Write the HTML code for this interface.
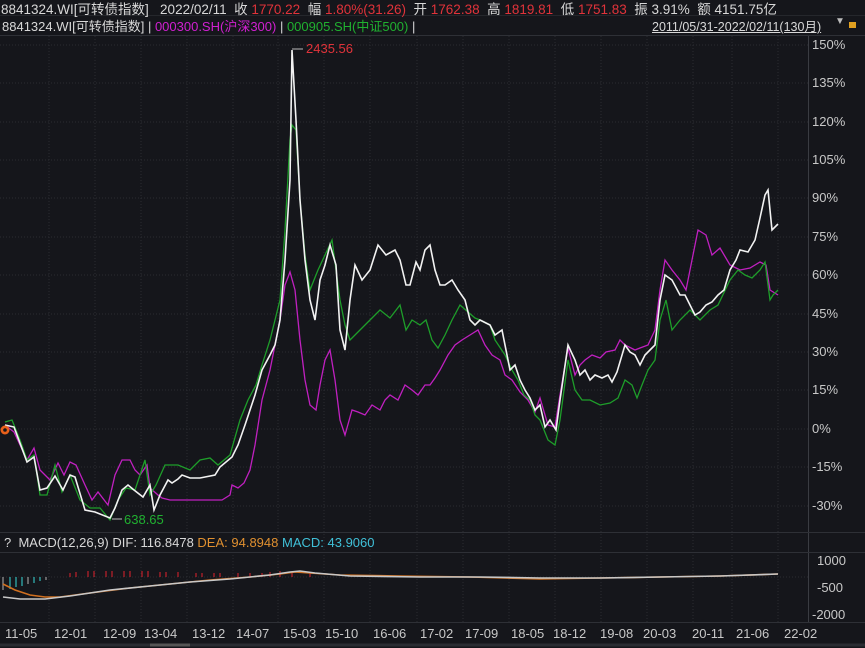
<!DOCTYPE html>
<html><head><meta charset="utf-8"><style>
html,body{margin:0;padding:0;background:#15161b;width:865px;height:648px;overflow:hidden;font-family:"Liberation Sans","Noto Sans CJK SC",sans-serif;}
.t{position:absolute;white-space:nowrap;font-size:13px;color:#d8d8d8;}
</style></head><body>
<svg width="865" height="648" style="position:absolute;left:0;top:0" xmlns="http://www.w3.org/2000/svg">
<rect width="865" height="648" fill="#15161b"/>
<line x1="0" y1="35.5" x2="865" y2="35.5" stroke="#2e3036"/>
<line x1="0" y1="15.5" x2="865" y2="15.5" stroke="#25272c"/>
<line x1="808.5" y1="36" x2="808.5" y2="622" stroke="#3a3c42"/>
<g stroke="#2a2c32" stroke-dasharray="1,2">
<line x1="0" y1="45" x2="808" y2="45"/><line x1="0" y1="83" x2="808" y2="83"/><line x1="0" y1="122" x2="808" y2="122"/><line x1="0" y1="160" x2="808" y2="160"/><line x1="0" y1="198" x2="808" y2="198"/><line x1="0" y1="237" x2="808" y2="237"/><line x1="0" y1="275" x2="808" y2="275"/><line x1="0" y1="314" x2="808" y2="314"/><line x1="0" y1="352" x2="808" y2="352"/><line x1="0" y1="390" x2="808" y2="390"/><line x1="0" y1="429" x2="808" y2="429"/><line x1="0" y1="467" x2="808" y2="467"/><line x1="0" y1="506" x2="808" y2="506"/>
<line x1="49" y1="36" x2="49" y2="622"/><line x1="95" y1="36" x2="95" y2="622"/><line x1="141" y1="36" x2="141" y2="622"/><line x1="187" y1="36" x2="187" y2="622"/><line x1="233" y1="36" x2="233" y2="622"/><line x1="278" y1="36" x2="278" y2="622"/><line x1="324" y1="36" x2="324" y2="622"/><line x1="370" y1="36" x2="370" y2="622"/><line x1="417" y1="36" x2="417" y2="622"/><line x1="463" y1="36" x2="463" y2="622"/><line x1="509" y1="36" x2="509" y2="622"/><line x1="555" y1="36" x2="555" y2="622"/><line x1="601" y1="36" x2="601" y2="622"/><line x1="647" y1="36" x2="647" y2="622"/><line x1="693" y1="36" x2="693" y2="622"/><line x1="732" y1="36" x2="732" y2="622"/><line x1="778" y1="36" x2="778" y2="622"/>
<line x1="0" y1="577" x2="808" y2="577"/>
</g>
<line x1="0" y1="532.5" x2="865" y2="532.5" stroke="#2e3036"/>
<line x1="0" y1="552.5" x2="865" y2="552.5" stroke="#2e3036"/>
<line x1="0" y1="622.5" x2="865" y2="622.5" stroke="#2e3036"/>
<line x1="0" y1="645" x2="865" y2="645" stroke="#2a2c32" stroke-width="3"/>
<line x1="150" y1="645" x2="190" y2="645" stroke="#555" stroke-width="3"/>
<polyline fill="none" stroke="#c020c0" stroke-width="1.3" points="5,425 14,432 27,460 34,448 40,470 50,480 58,463 64,475 70,462 76,465 85,485 92,500 98,492 108,505 115,475 122,460 130,460 135,470 140,475 147,465 150,488 158,495 162,498 170,500 190,500 222,500 230,495 232,485 238,488 244,483 250,470 255,445 262,400 270,370 280,320 285,285 290,272 295,290 300,340 305,380 310,405 316,410 320,385 325,360 330,350 335,380 340,420 345,435 352,410 358,412 365,415 372,405 380,410 385,400 390,395 398,400 405,385 412,390 418,395 425,385 430,385 435,378 440,370 448,355 455,345 462,340 470,335 478,330 485,345 492,355 500,360 505,375 512,380 520,392 528,400 535,412 540,398 548,425 555,427 560,395 568,348 575,375 580,365 585,360 592,355 600,358 606,352 615,350 620,340 625,345 635,350 640,348 648,345 655,330 660,290 665,260 672,270 680,280 686,290 692,260 698,230 706,235 712,255 720,248 730,265 740,270 750,268 760,262 766,265 770,290 778,295"/>
<polyline fill="none" stroke="#1e9e2a" stroke-width="1.3" points="5,422 12,420 20,440 27,460 34,455 40,495 47,495 55,465 62,492 70,475 80,500 90,508 100,508 110,520 118,500 126,488 135,490 145,460 150,495 156,485 165,465 178,465 190,470 200,460 210,458 218,465 230,455 240,420 248,400 256,385 262,365 270,340 280,300 285,230 290,140 292,125 296,130 300,200 305,255 310,290 318,270 325,255 332,240 340,300 345,325 350,340 360,330 370,320 380,310 390,318 400,305 406,330 412,320 420,325 426,320 432,340 438,348 445,335 452,320 460,305 468,312 475,318 480,320 490,325 495,340 505,355 512,370 518,380 524,395 530,400 535,415 540,420 548,440 555,445 560,420 568,360 575,390 582,400 590,400 600,405 610,403 618,398 625,380 632,385 637,398 642,385 648,370 655,360 660,320 666,300 672,330 680,320 690,310 700,320 710,310 718,305 730,280 738,270 745,275 752,278 760,270 765,262 770,300 773,295 778,290"/>
<polyline fill="none" stroke="#f2f2f2" stroke-width="1.6" points="5,425 14,427 27,462 34,457 40,490 47,488 55,476 63,490 70,475 75,477 85,510 95,512 110,518 115,508 122,490 128,485 134,490 143,497 150,485 154,510 160,495 168,480 172,483 178,479 182,475 190,478 200,478 215,475 220,467 232,457 238,445 245,425 255,395 262,370 270,355 275,345 280,320 285,260 290,180 292,50 296,120 300,200 305,260 310,300 315,320 320,280 325,265 330,245 336,265 340,330 345,350 350,300 355,265 362,280 370,270 378,245 386,255 395,250 400,260 406,285 410,285 416,262 420,270 425,250 430,245 435,270 440,285 445,285 452,280 458,290 465,300 470,320 475,325 480,320 490,325 495,335 502,330 510,370 515,365 520,380 525,390 530,398 535,410 540,405 545,427 550,420 556,430 560,400 568,345 575,360 580,375 585,370 590,380 595,375 602,378 608,375 612,382 617,372 625,345 630,352 635,355 640,365 645,355 650,350 655,345 660,300 665,275 672,280 680,295 685,295 690,305 695,315 700,312 706,305 712,302 718,295 724,290 730,270 736,260 740,250 748,252 755,240 760,218 765,195 768,190 772,230 778,224"/>
<polyline fill="none" stroke="#bbb" points="292,49 303,49"/>
<polyline fill="none" stroke="#bbb" points="112,519 122,519"/>
<circle cx="5" cy="430" r="4.5" fill="#e8601a"/><circle cx="5" cy="430" r="1.8" fill="#15161b"/>
<g stroke-width="1.2">
<line x1="3" y1="577" x2="3" y2="590" stroke="#999"/><line x1="10" y1="577" x2="10" y2="589" stroke="#3bb"/><line x1="16" y1="577" x2="16" y2="587" stroke="#3bb"/><line x1="22" y1="577" x2="22" y2="586" stroke="#3bb"/><line x1="28" y1="577" x2="28" y2="584" stroke="#999"/><line x1="34" y1="577" x2="34" y2="583" stroke="#3bb"/><line x1="40" y1="577" x2="40" y2="581" stroke="#3bb"/><line x1="46" y1="577" x2="46" y2="580" stroke="#999"/>
</g>
<g stroke="#c0202a" stroke-width="1.2">
<line x1="70" y1="573" x2="70" y2="577"/><line x1="76" y1="572" x2="76" y2="577"/><line x1="88" y1="571" x2="88" y2="577"/><line x1="94" y1="571" x2="94" y2="577"/><line x1="106" y1="571" x2="106" y2="577"/><line x1="112" y1="571" x2="112" y2="577"/><line x1="124" y1="571" x2="124" y2="577"/><line x1="130" y1="571" x2="130" y2="577"/><line x1="142" y1="571" x2="142" y2="577"/><line x1="148" y1="571" x2="148" y2="577"/><line x1="160" y1="572" x2="160" y2="577"/><line x1="166" y1="572" x2="166" y2="577"/><line x1="178" y1="572" x2="178" y2="577"/><line x1="196" y1="573" x2="196" y2="577"/><line x1="202" y1="573" x2="202" y2="577"/><line x1="214" y1="573" x2="214" y2="577"/><line x1="220" y1="573" x2="220" y2="577"/><line x1="238" y1="573" x2="238" y2="577"/><line x1="250" y1="573" x2="250" y2="577"/><line x1="262" y1="573" x2="262" y2="577"/><line x1="270" y1="572" x2="270" y2="577"/><line x1="280" y1="571" x2="280" y2="577"/><line x1="292" y1="572" x2="292" y2="577"/><line x1="310" y1="572" x2="310" y2="577"/>
</g>
<polyline fill="none" stroke="#d07020" stroke-width="1.6" points="3,584 15,590 30,595 45,597 60,597 90,593 130,588 170,584 210,580 250,577 280,574 295,572 310,573 340,575 400,576 470,577 540,579 600,578 660,577 720,576 778,574"/>
<polyline fill="none" stroke="#c8c8c8" stroke-width="1.6" points="3,597 20,599 45,599 70,596 110,590 150,586 190,582 230,579 270,575 290,572 300,571 315,573 350,576 420,577 480,577 540,578 600,578 660,577 720,576 778,574"/>
</svg>
<div class="t" style="left:1px;top:-2px;font-size:13.5px;">8841324.WI[可转债指数]&nbsp;&nbsp;&nbsp;2022/02/11&nbsp;&nbsp;收 <span style="color:#e0333a">1770.22</span>&nbsp;&nbsp;幅 <span style="color:#e0333a">1.80%(31.26)</span>&nbsp;&nbsp;开 <span style="color:#e0333a">1762.38</span>&nbsp;&nbsp;高 <span style="color:#e0333a">1819.81</span>&nbsp;&nbsp;低 <span style="color:#e0333a">1751.83</span>&nbsp;&nbsp;振 3.91%&nbsp;&nbsp;额 4151.75亿</div>
<div class="t" style="left:2px;top:16px;">8841324.WI[可转债指数] | <span style="color:#d020d0">000300.SH(沪深300)</span> | <span style="color:#20b030">000905.SH(中证500)</span> |</div>
<div class="t" style="left:652px;top:16px;text-decoration:underline;font-size:12.5px;">2011/05/31-2022/02/11(130月)</div>
<div class="t" style="left:835px;top:16px;font-size:10px;color:#bbb;">▼</div>
<div style="position:absolute;left:849px;top:22px;width:7px;height:6px;background:#e0a020;"></div>
<div class="t" style="left:306px;top:41px;color:#e0333a;">2435.56</div>
<div class="t" style="left:124px;top:512px;color:#20b030;">638.65</div>
<div class="t" style="left:812px;top:37px;color:#c8c8c8;">150%</div>
<div class="t" style="left:812px;top:75px;color:#c8c8c8;">135%</div>
<div class="t" style="left:812px;top:114px;color:#c8c8c8;">120%</div>
<div class="t" style="left:812px;top:152px;color:#c8c8c8;">105%</div>
<div class="t" style="left:812px;top:190px;color:#c8c8c8;">90%</div>
<div class="t" style="left:812px;top:229px;color:#c8c8c8;">75%</div>
<div class="t" style="left:812px;top:267px;color:#c8c8c8;">60%</div>
<div class="t" style="left:812px;top:306px;color:#c8c8c8;">45%</div>
<div class="t" style="left:812px;top:344px;color:#c8c8c8;">30%</div>
<div class="t" style="left:812px;top:382px;color:#c8c8c8;">15%</div>
<div class="t" style="left:812px;top:421px;color:#c8c8c8;">0%</div>
<div class="t" style="left:812px;top:459px;color:#c8c8c8;">-15%</div>
<div class="t" style="left:812px;top:498px;color:#c8c8c8;">-30%</div>
<div class="t" style="left:4px;top:535px;">?&nbsp; MACD(12,26,9) DIF: 116.8478 <span style="color:#e09030">DEA: 94.8948</span> <span style="color:#40c0d8">MACD: 43.9060</span></div>
<div class="t" style="left:817px;top:553px;color:#c8c8c8;">1000</div>
<div class="t" style="left:817px;top:580px;color:#c8c8c8;">-500</div>
<div class="t" style="left:812px;top:607px;color:#c8c8c8;">-2000</div>
<div class="t" style="top:626px;left:5px;color:#c8c8c8;">11-05</div>
<div class="t" style="top:626px;left:54px;color:#c8c8c8;">12-01</div>
<div class="t" style="top:626px;left:103px;color:#c8c8c8;">12-09</div>
<div class="t" style="top:626px;left:144px;color:#c8c8c8;">13-04</div>
<div class="t" style="top:626px;left:192px;color:#c8c8c8;">13-12</div>
<div class="t" style="top:626px;left:236px;color:#c8c8c8;">14-07</div>
<div class="t" style="top:626px;left:283px;color:#c8c8c8;">15-03</div>
<div class="t" style="top:626px;left:325px;color:#c8c8c8;">15-10</div>
<div class="t" style="top:626px;left:373px;color:#c8c8c8;">16-06</div>
<div class="t" style="top:626px;left:420px;color:#c8c8c8;">17-02</div>
<div class="t" style="top:626px;left:465px;color:#c8c8c8;">17-09</div>
<div class="t" style="top:626px;left:511px;color:#c8c8c8;">18-05</div>
<div class="t" style="top:626px;left:553px;color:#c8c8c8;">18-12</div>
<div class="t" style="top:626px;left:600px;color:#c8c8c8;">19-08</div>
<div class="t" style="top:626px;left:643px;color:#c8c8c8;">20-03</div>
<div class="t" style="top:626px;left:692px;color:#c8c8c8;">20-11</div>
<div class="t" style="top:626px;left:736px;color:#c8c8c8;">21-06</div>
<div class="t" style="top:626px;left:784px;color:#c8c8c8;">22-02</div>
</body></html>
